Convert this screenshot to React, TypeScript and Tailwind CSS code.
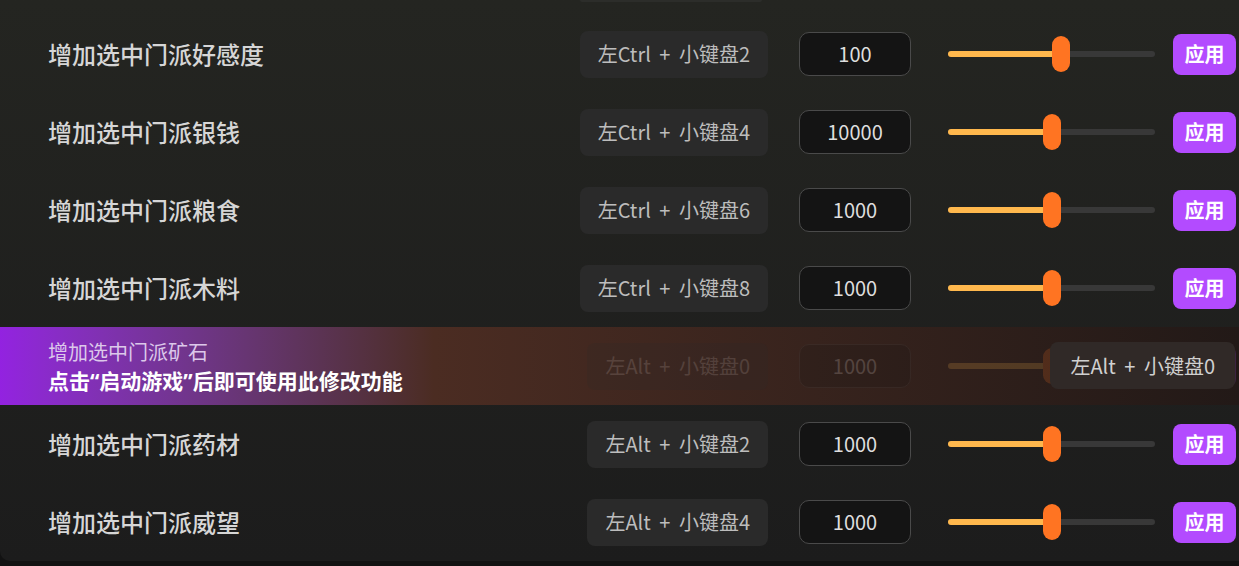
const FONT = { fontFamily: '"Noto Sans CJK SC", "Noto Sans", sans-serif' };

interface Cheat {
  label: string;
  keys: string;
  value: string;
  pct: number;
  locked?: boolean;
}

const cheats: Cheat[] = [
  { label: "增加选中门派好感度", keys: "左Ctrl + 小键盘2", value: "100", pct: 0.55 },
  { label: "增加选中门派银钱", keys: "左Ctrl + 小键盘4", value: "10000", pct: 0.5 },
  { label: "增加选中门派粮食", keys: "左Ctrl + 小键盘6", value: "1000", pct: 0.5 },
  { label: "增加选中门派木料", keys: "左Ctrl + 小键盘8", value: "1000", pct: 0.5 },
  { label: "增加选中门派矿石", keys: "左Alt + 小键盘0", value: "1000", pct: 0.5, locked: true },
  { label: "增加选中门派药材", keys: "左Alt + 小键盘2", value: "1000", pct: 0.5 },
  { label: "增加选中门派威望", keys: "左Alt + 小键盘4", value: "1000", pct: 0.5 },
];

function Slider({ pct }: { pct: number }) {
  const left = pct * (207 - 18);
  return (
    <div className="relative w-[207px] h-[36px] flex items-center">
      <div className="w-full h-[6px] rounded-full bg-[#383838] overflow-hidden">
        <div className="h-full bg-[#ffb84d]" style={{ width: left + 9 }} />
      </div>
      <div
        className="absolute top-0 w-[18px] h-[36px] rounded-full bg-[#ff7422]"
        style={{ left }}
      />
    </div>
  );
}

function Keycap({ keys, tone = "bg-[#2a2a2a] px-[18px]" }: { keys: string; tone?: string }) {
  return (
    <div
      className={`h-[47px] flex items-center rounded-lg text-[#bdbdbd] text-[20px] [word-spacing:4px] ${tone}`}
    >
      {keys}
    </div>
  );
}

function Controls({ c }: { c: Cheat }) {
  return (
    <div className="flex items-center">
      <Keycap keys={c.keys} />
      <div className="ml-[31px] w-[112px] h-[44px] flex items-center justify-center rounded-[10px] bg-[#141414] border border-[#4a4a4a] text-[#dedede] text-[20px]">
        {c.value}
      </div>
      <div className="ml-[37px]">
        <Slider pct={c.pct} />
      </div>
      <button className="ml-[18px] w-[63px] h-[41px] rounded-lg bg-[#b34bff] text-white text-[20px] font-bold">
        应用
      </button>
    </div>
  );
}

function Row({ c }: { c: Cheat }) {
  if (c.locked) {
    return (
      <div className="relative h-[78px] flex items-center justify-between pl-[48px] pr-[3px] bg-gradient-to-r from-[#9322e0] via-[#4b2c22] via-35% to-[#221917]">
        <div className="flex flex-col leading-[28px]">
          <span className="text-[20px] text-[#dcc8ea]">{c.label}</span>
          <span className="text-[21px] font-bold text-white">
            点击<span style={{ fontFamily: '"Noto Sans", sans-serif' }}>“</span>启动游戏
            <span style={{ fontFamily: '"Noto Sans", sans-serif' }}>”</span>后即可使用此修改功能
          </span>
        </div>
        <div className="opacity-[0.18]">
          <Controls c={c} />
        </div>
        <div className="absolute right-[4px] top-[15px]">
          <Keycap keys={c.keys} tone="bg-[#302927] text-[#d0d0d0] px-[20px]" />
        </div>
      </div>
    );
  }
  return (
    <div className="h-[78px] flex items-center justify-between pl-[48px] pr-[3px]">
      <span className="text-[24px] font-medium text-[#d6d6d6]">{c.label}</span>
      <Controls c={c} />
    </div>
  );
}

export default function App() {
  return (
    <div className="w-[1239px] h-[566px] overflow-hidden bg-[#121212]" style={FONT}>
      <div className="h-[561px] overflow-hidden rounded-bl-[10px] bg-gradient-to-b from-[#242521] to-[#1c1c1c]">
        {/* bottom edge of the row scrolled above */}
        <div className="h-[15px] flex justify-end items-start pr-[477px]">
          <div className="w-[182px] h-[2px] rounded-b bg-[#2c2d2a]" />
        </div>
        {cheats.map((c) => (
          <Row key={c.label} c={c} />
        ))}
      </div>
    </div>
  );
}
